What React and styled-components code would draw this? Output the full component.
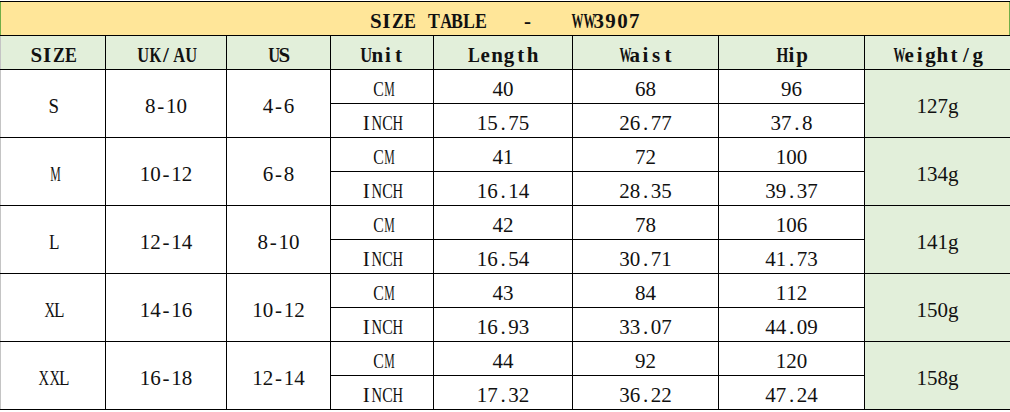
import React from "react";
import styled, { createGlobalStyle } from "styled-components";

const Global = createGlobalStyle`
  html, body { margin: 0; padding: 0; background: #fff; }
  body { font-family: "Liberation Serif", "Times New Roman", serif; color: #111; }
`;

const Sheet = styled.div`
  margin-top: 1px;
  display: grid;
  grid-template-columns: 105px 120px 103px 102px 138px 145px 145px 145px;
  grid-auto-rows: 33px;
  gap: 1px;
  padding: 1px 0;
  background: #000;
  width: 1010px;
`;

const Cell = styled.div`
  display: flex;
  align-items: center;
  justify-content: center;
  padding-top: 6px;
  box-sizing: border-box;
  background: ${(p) => p.$bg || "#fff"};
  grid-row: ${(p) => (p.$span ? `span ${p.$span}` : "auto")};
  border-left: ${(p) => (p.$first ? "1px solid #c4c4c4" : "none")};
  font-size: 21px;
  font-weight: ${(p) => (p.$bold ? 700 : 400)};
`;

const Title = styled(Cell)`
  grid-column: 1 / -1;
  background: #ffe699;
  border-left: 1px solid #70ad47;
  border-right: 1px solid #70ad47;
`;

const Line = styled.span`
  display: inline-flex;
  line-height: 1;
  white-space: pre;
`;

const Ch = styled.span`
  display: inline-block;
  width: ${(p) => (p.$narrow ? 0.8 : 1) * (p.$bold ? 0.565 : 0.5)}em;
  text-align: center;
`;

const REG = { A: .722, B: .667, C: .667, D: .722, E: .611, G: .722, H: .722, I: .333, K: .722, L: .611, M: .889, N: .722, S: .556, T: .611, U: .722, W: .944, X: .722, Z: .611, m: .778, w: .722, ".": .25, "-": .333, "/": .278 };
const BOLD = { A: .722, B: .667, C: .722, E: .667, H: .778, I: .389, K: .778, L: .667, M: .944, N: .722, S: .556, T: .667, U: .722, W: 1.0, X: .722, Z: .667, e: .444, g: .5, h: .556, i: .278, n: .556, t: .333, a: .5, p: .556, u: .556, "/": .278, "-": .333 };
const NARROW = new Set(["I", "i"]);

function Mono({ text, bold }) {
  const cell = bold ? 0.565 : 0.5;
  const table = bold ? BOLD : REG;
  return (
    <Line>
      {text.split("").map((c, i) => {
        const w = table[c] || 0.5;
        const s = Math.min(1, cell / w);
        return (
          <Ch
            key={i}
            $bold={bold}
            $narrow={NARROW.has(c)}
            style={s < 1 ? { transform: `scaleX(${s.toFixed(3)})` } : undefined}
          >
            {c === " " ? "\u00a0" : c}
          </Ch>
        );
      })}
    </Line>
  );
}

const HEAD = ["SIZE", "UK/AU", "US", "Unit", "Length", "Waist", "Hip", "Weight/g"];

const ROWS = [
  ["S", "8-10", "4-6", ["40", "68", "96"], ["15.75", "26.77", "37.8"], "127g"],
  ["M", "10-12", "6-8", ["41", "72", "100"], ["16.14", "28.35", "39.37"], "134g"],
  ["L", "12-14", "8-10", ["42", "78", "106"], ["16.54", "30.71", "41.73"], "141g"],
  ["XL", "14-16", "10-12", ["43", "84", "112"], ["16.93", "33.07", "44.09"], "150g"],
  ["XXL", "16-18", "12-14", ["44", "92", "120"], ["17.32", "36.22", "47.24"], "158g"],
];

const GREEN = "#e2efda";

export default function App() {
  return (
    <>
      <Global />
      <Sheet>
        <Title $bold>
          <Mono bold text={"SIZE TABLE   -   WW3907"} />
        </Title>
        {HEAD.map((h, i) => (
          <Cell key={h} $bold $bg={GREEN} $first={i === 0}>
            <Mono bold text={h} />
          </Cell>
        ))}
        {ROWS.map(([size, uk, us, cm, inch, weight]) => (
          <React.Fragment key={size}>
            <Cell $span={2} $first>
              <Mono text={size} />
            </Cell>
            <Cell $span={2}>
              <Mono text={uk} />
            </Cell>
            <Cell $span={2}>
              <Mono text={us} />
            </Cell>
            <Cell>
              <Mono text="CM" />
            </Cell>
            {cm.map((v, i) => (
              <Cell key={"c" + i}>
                <Mono text={v} />
              </Cell>
            ))}
            <Cell $span={2} $bg={GREEN}>
              <Mono text={weight} />
            </Cell>
            <Cell>
              <Mono text="INCH" />
            </Cell>
            {inch.map((v, i) => (
              <Cell key={"i" + i}>
                <Mono text={v} />
              </Cell>
            ))}
          </React.Fragment>
        ))}
      </Sheet>
    </>
  );
}
